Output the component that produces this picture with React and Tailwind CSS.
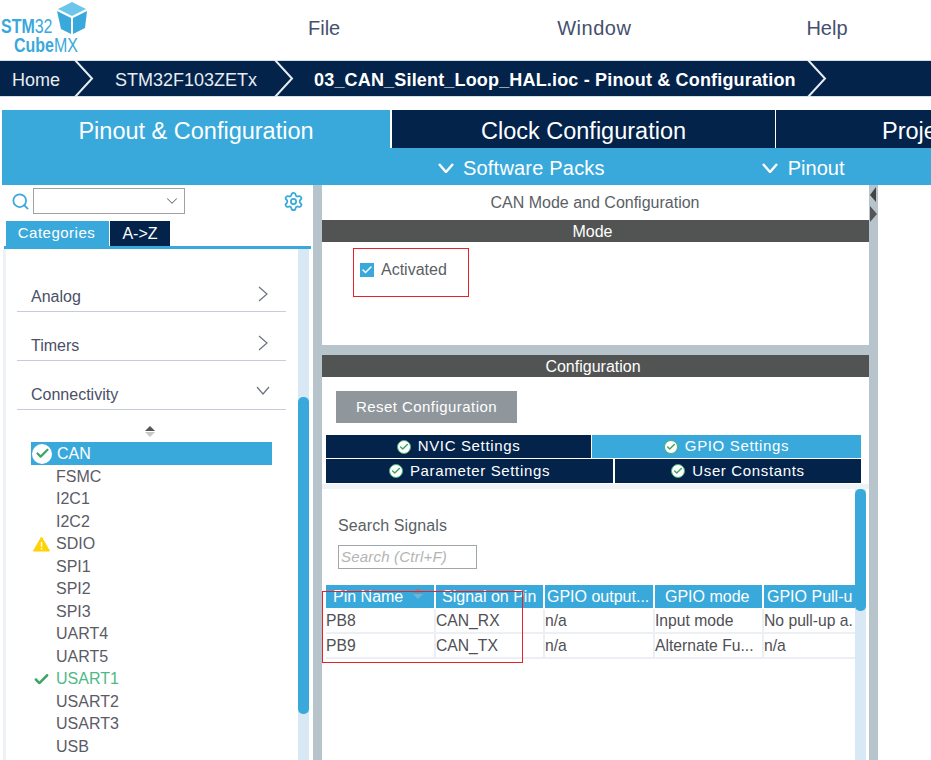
import React from 'react';
import { ChevronDown, Search, Settings, Check } from 'lucide-react';

const items = ['FSMC', 'I2C1', 'I2C2', 'SDIO', 'SPI1', 'SPI2', 'SPI3', 'UART4', 'UART5', 'USART1', 'USART2', 'USART3', 'USB'];

const columns = [
  { name: 'Pin Name', width: 'w-[110px]', pad: 'pl-[7px]' },
  { name: 'Signal on Pin', width: 'w-[109px]', pad: 'pl-[6px]' },
  { name: 'GPIO output...', width: 'w-[110px]', pad: 'pl-[2px]' },
  { name: 'GPIO mode', width: 'w-[109px]', pad: 'pl-[10px]' },
  { name: 'GPIO Pull-u', width: 'w-[91px]', pad: 'pl-[3px]' },
];

const rows = [
  ['PB8', 'CAN_RX', 'n/a', 'Input mode', 'No pull-up a.'],
  ['PB9', 'CAN_TX', 'n/a', 'Alternate Fu...', 'n/a'],
];

function Crumb() {
  return (
    <svg width="20" height="37" viewBox="0 0 20 37" className="shrink-0">
      <polyline points="1,0 18,18.5 1,37" fill="none" stroke="#e8edf2" strokeWidth="2" />
    </svg>
  );
}

function Logo() {
  return (
    <div className="relative w-[90px] h-[60px] shrink-0">
      <svg width="30" height="34" viewBox="0 0 30 34" className="absolute left-[57px] top-[2px]">
        <polygon points="15,0 29,7 15,14 1,7" fill="#6cc5ea" />
        <polygon points="0,9 14,16 14,32 4,27" fill="#39a9dc" />
        <polygon points="30,9 16,16 16,32 28,26" fill="#39a9dc" />
      </svg>
      <div className="absolute left-[1px] top-[17px] text-[21px] leading-[18px] text-[#39a9dc] origin-left scale-x-[0.76] whitespace-nowrap">
        <span className="font-bold">STM</span>32
      </div>
      <div className="absolute left-[14px] top-[36px] text-[21px] leading-[18px] text-[#39a9dc] origin-left scale-x-[0.76] whitespace-nowrap">
        <span className="font-bold">Cube</span>MX
      </div>
    </div>
  );
}

function OkBadge() {
  return (
    <span className="w-[14px] h-[14px] rounded-full bg-white border border-[#4caf73] flex items-center justify-center shrink-0">
      <Check size={10} strokeWidth={3.5} className="text-[#3fa565]" />
    </span>
  );
}

function SubTab({ label, width, active }) {
  return (
    <div className={`${width} flex items-center justify-center gap-[7px] text-white text-[15px] tracking-[0.65px] ${active ? 'bg-[#39a9dc]' : 'bg-[#03234b]'}`}>
      <OkBadge />
      {label}
    </div>
  );
}

function Category({ label, open }) {
  return (
    <div className={`ml-[17px] w-[269px] h-[49px] flex items-end justify-between border-b border-[#c5ced8] pl-[14px] pb-[3px] text-[16px] leading-[22px] text-[#4a5068] ${open ? 'pr-[16px]' : 'pr-[18px]'}`}>
      <span>{label}</span>
      {open ? (
        <svg width="14" height="9" viewBox="0 0 14 9" className="mb-[11px]">
          <polyline points="1,1 7,8 13,1" fill="none" stroke="#6b7280" strokeWidth="1.2" />
        </svg>
      ) : (
        <svg width="10" height="16" viewBox="0 0 10 16" className="mb-[6px]">
          <polyline points="1,1 9,8 1,15" fill="none" stroke="#6b7280" strokeWidth="1.2" />
        </svg>
      )}
    </div>
  );
}

function SideItem({ label }) {
  const green = label === 'USART1';
  return (
    <div className={`h-[22.5px] flex items-center text-[16px] ${green ? 'text-[#4fb985]' : 'text-[#5b5b66]'}`}>
      <span className="w-[25px] flex justify-start shrink-0 pl-[2px]">
        {label === 'SDIO' && (
          <svg width="17" height="16" viewBox="0 0 17 16">
            <polygon points="8.5,1 16.5,15 0.5,15" fill="#ffd200" stroke="#ffd200" strokeLinejoin="round" />
            <rect x="7.8" y="6" width="1.5" height="5" fill="#fff" />
            <rect x="7.8" y="12" width="1.5" height="1.5" fill="#fff" />
          </svg>
        )}
        {green && <Check size={17} strokeWidth={3.5} className="text-[#3fa565]" />}
      </span>
      {label}
    </div>
  );
}

function Sidebar() {
  return (
    <div className="w-[313px] shrink-0 flex flex-col">
      <div className="h-[36px] flex items-center pl-[11px] pr-[9px] pb-[4px]">
        <Search size={19} strokeWidth={2.2} className="text-[#39a9dc] shrink-0" />
        <div className="ml-[3px] w-[152px] h-[26px] border border-[#9ca3a8] flex items-center justify-end pr-[3px]">
          <ChevronDown size={18} strokeWidth={1.4} className="text-[#6b7280]" />
        </div>
        <Settings size={21} strokeWidth={2} className="text-[#39a9dc] ml-auto" />
      </div>
      <div className="flex pl-[6px] h-[25px]">
        <div className="w-[103px] bg-[#39a9dc] text-white text-[15px] tracking-[0.5px] flex items-center justify-center pr-[2px]">Categories</div>
        <div className="ml-[1px] w-[60px] bg-[#03234b] text-white text-[16px] flex items-center justify-center">A-&gt;Z</div>
      </div>
      <div className="ml-[4px] w-[307px] h-[3px] bg-[#39a9dc]" />
      <div className="flex-1 flex min-h-0">
        <div className="w-[3px] ml-[3px] bg-[#eef2f6]" />
        <div className="w-[297px] -ml-[6px]">
          <div className="h-[14px]" />
          <Category label="Analog" />
          <Category label="Timers" />
          <Category label="Connectivity" open />
          <div className="h-[32px] flex flex-col items-center justify-center gap-[1px] pt-[10px] pr-[2px] pl-[5px]">
            <span className="w-0 h-0 border-x-[5px] border-x-transparent border-b-[5px] border-b-[#555]" />
            <span className="w-0 h-0 border-x-[5px] border-x-transparent border-t-[5px] border-t-[#c8c8c8]" />
          </div>
          <div className="ml-[31px] w-[241px] h-[23px] bg-[#39a9dc] flex items-center text-white text-[16px] pl-[1px]">
            <span className="w-[20px] h-[20px] rounded-full bg-white flex items-center justify-center shrink-0">
              <Check size={15} strokeWidth={3.5} className="text-[#3fa565]" />
            </span>
            <span className="ml-[5px]">CAN</span>
          </div>
          <div className="ml-[31px] pt-[0.5px]">
            {items.map((label) => <SideItem key={label} label={label} />)}
          </div>
        </div>
        <div className="ml-[1px] w-[11px] bg-[#d8e8f5]">
          <div className="mt-[148px] h-[317px] bg-[#39a9dc] rounded-[5px]" />
        </div>
      </div>
    </div>
  );
}

function Divider({ arrows }) {
  return (
    <div className="w-[9px] shrink-0 bg-[#b8c4cc] flex flex-col">
      {arrows && (
        <>
          <svg width="9" height="18" viewBox="0 0 9 18" className="mt-[2px]"><polygon points="7,0 7,15 1,8" fill="#444" /></svg>
          <svg width="9" height="18" viewBox="0 0 9 18"><polygon points="1,1 1,17 8,9" fill="#555" /></svg>
        </>
      )}
    </div>
  );
}

function SignalTable() {
  return (
    <div className="mt-[16px] relative">
      <div className="flex mb-[1px]">
        {columns.map((c) => (
          <div key={c.name} className={`${c.width} h-[23px] pr-[2px] last:pr-0 shrink-0`}>
            <div className={`h-full bg-[#39a9dc] text-white text-[16px] ${c.pad} flex items-center whitespace-nowrap overflow-hidden`}>
              {c.name}
            </div>
          </div>
        ))}
      </div>
      {rows.map((row) => (
        <div key={row[0]} className="flex border-b-2 border-[#eceff3] h-[25px]">
          {row.map((cell, i) => (
            <div key={i} className={`${columns[i].width} shrink-0 text-[15.7px] leading-[24px] text-[#4f4f55] whitespace-nowrap border-r-2 border-[#eceff3] overflow-hidden last:border-r-0`}>
              {cell}
            </div>
          ))}
        </div>
      ))}
      <div className="absolute left-[87px] top-[3px] flex flex-col gap-[1px]">
        <span className="w-0 h-0 border-x-[5px] border-x-transparent border-b-[5px] border-b-[#7b8a94]" />
        <span className="w-0 h-0 border-x-[5px] border-x-transparent border-t-[5px] border-t-[#6cb6d8]" />
      </div>
    </div>
  );
}

function ConfigPanel() {
  return (
    <div className="w-[547px] shrink-0 flex flex-col min-h-0">
      <div className="h-[35px] flex items-center justify-center text-[16px] text-[#5a5f66] pt-[1px] pr-[1px]">CAN Mode and Configuration</div>
      <div className="h-[22px] bg-[#525453] text-white text-[16px] flex items-center justify-center pr-[6px] pt-[2px]">Mode</div>
      <div className="h-[103px] pl-[38px] pt-[20px] flex items-start">
        <span className="w-[14px] h-[14px] bg-[#39a9dc] flex items-center justify-center mt-[1px]">
          <Check size={12} strokeWidth={3} className="text-white" />
        </span>
        <span className="ml-[7px] text-[16px] leading-[16px] text-[#5a5f66]">Activated</span>
      </div>
      <div className="h-[10px] bg-[#b8c4cc]" />
      <div className="h-[22px] bg-[#525453] text-white text-[16px] flex items-center justify-center pr-[5px] pt-[2px]">Configuration</div>
      <div className="ml-[14px] mt-[14px] w-[181px] h-[32px] bg-[#8f979c] text-white text-[15px] tracking-[0.45px] flex items-center justify-center">Reset Configuration</div>
      <div className="ml-[4px] mt-[12px] w-[535px] flex flex-col gap-[1px]">
        <div className="flex h-[23px] gap-[1px]">
          <SubTab label="NVIC Settings" width="w-[265px]" />
          <SubTab label="GPIO Settings" width="w-[269px]" active />
        </div>
        <div className="flex h-[24px] gap-[2px]">
          <SubTab label="Parameter Settings" width="w-[287px]" />
          <SubTab label="User Constants" width="w-[246px]" />
        </div>
      </div>
      <div className="h-[5px] mt-[1px] bg-[#f0f3f5]" />
      <div className="flex-1 flex min-h-0">
        <div className="flex-1 min-w-0 overflow-hidden pl-[4px]">
          <div className="ml-[12px] mt-[27px] text-[16px] leading-[20px] tracking-[0.1px] text-[#5a5f66]">Search Signals</div>
          <div className="ml-[12px] mt-[9px] w-[139px] h-[24px] border border-[#a0a6aa] text-[15px] italic tracking-[0.2px] text-[#b4b4b4] pl-[2px] flex items-center">Search (Ctrl+F)</div>
          <SignalTable />
        </div>
        <div className="w-[11px] mr-[3px] bg-[#d8e8f5]">
          <div className="h-[122px] bg-[#39a9dc] rounded-[5px]" />
        </div>
      </div>
    </div>
  );
}

function PackChevron() {
  return (
    <svg width="16" height="10" viewBox="0 0 16 10" className="shrink-0">
      <polyline points="1,1 8,9 15,1" fill="none" stroke="#fff" strokeWidth="2.4" />
    </svg>
  );
}

export default function App() {
  return (
    <div className="relative w-[931px] h-[760px] overflow-hidden bg-white flex flex-col font-['Liberation_Sans',Arial,sans-serif]">
      {/* top menu */}
      <div className="h-[60px] flex items-center shrink-0">
        <Logo />
        <div className="flex items-center text-[20px] text-[#45506e] pb-[4px]">
          <span className="ml-[218px]">File</span>
          <span className="ml-[217px] tracking-[0.5px]">Window</span>
          <span className="ml-[175px]">Help</span>
        </div>
      </div>

      {/* breadcrumb */}
      <div className="h-[37px] bg-[#03234b] flex items-center text-[18px] text-[#e8edf2] shrink-0 border-y border-[#d5dde5]">
        <span className="ml-[12px] pt-[4px]">Home</span>
        <span className="ml-[14px]"><Crumb /></span>
        <span className="ml-[21px] pt-[4px]">STM32F103ZETx</span>
        <span className="ml-[17px]"><Crumb /></span>
        <span className="ml-[20px] pt-[4px] font-bold text-white tracking-[0.17px] whitespace-nowrap">03_CAN_Silent_Loop_HAL.ioc - Pinout &amp; Configuration</span>
        <span className="ml-[11px]"><Crumb /></span>
      </div>

      {/* main tabs */}
      <div className="mt-[13px] h-[38px] flex shrink-0 text-[23.5px] text-white">
        <div className="ml-[2px] w-[388px] bg-[#39a9dc] flex items-center justify-center pt-[5px]">Pinout &amp; Configuration</div>
        <div className="ml-[2px] w-[383px] bg-[#03234b] flex items-center justify-center pt-[5px]">Clock Configuration</div>
        <div className="ml-[1px] flex-1 bg-[#03234b] flex items-center pl-[106px] pt-[5px] whitespace-nowrap overflow-hidden">Project Manager</div>
      </div>
      <div className="ml-[2px] h-[37px] bg-[#39a9dc] flex items-center text-[20px] text-white shrink-0 pl-[436px] pt-[2px]">
        <PackChevron />
        <span className="ml-[9px] tracking-[0.2px]">Software Packs</span>
        <span className="ml-[157px]"><PackChevron /></span>
        <span className="ml-[10px]">Pinout</span>
      </div>

      {/* body */}
      <div className="flex-1 flex min-h-0">
        <Sidebar />
        <Divider />
        <ConfigPanel />
        <Divider arrows />
      </div>

      {/* red annotation boxes drawn on top of the screenshot */}
      <div className="absolute left-[353px] top-[248px] w-[116px] h-[49px] border border-[#e8202a]" />
      <div className="absolute left-[322px] top-[591px] w-[201px] h-[72px] border border-[#e8202a]" />
    </div>
  );
}
